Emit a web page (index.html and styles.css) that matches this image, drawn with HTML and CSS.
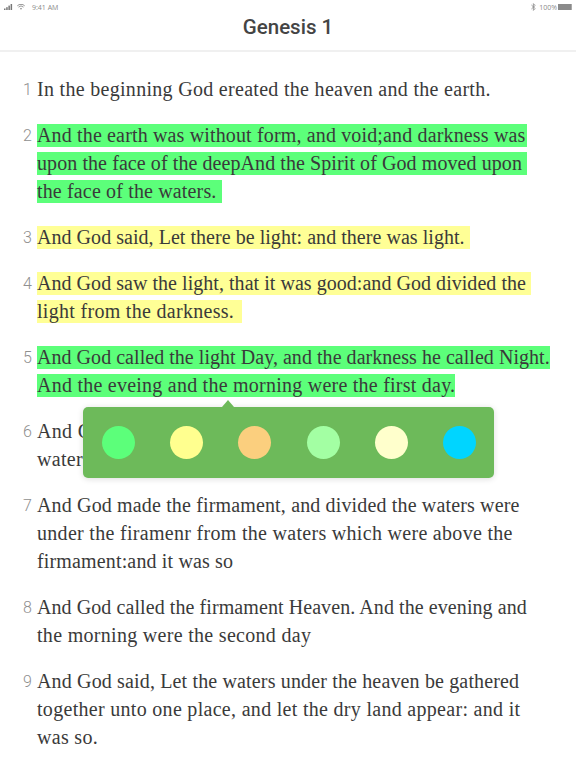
FILE: index.html
```html
<!DOCTYPE html>
<html lang="en">
<head>
<meta charset="utf-8">
<title>Genesis 1</title>
<link rel="stylesheet" href="styles.css">
</head>
<body>
<div class="page">
  <header class="header">
    <div class="status">
      <div class="status-left">
        <svg class="signal" width="11" height="6" viewBox="0 0 11 6"><rect x="0" y="4.5" width="1.5" height="1.5"/><rect x="2.2" y="3.2" width="1.5" height="2.8"/><rect x="4.4" y="1.6" width="1.5" height="4.4"/><rect x="6.6" y="0" width="1.5" height="6"/></svg>
        <svg class="wifi" width="8" height="6" viewBox="0 0 8 6"><path d="M0.3 1.8A5.4 5.4 0 0 1 7.7 1.8M1.5 3.1A3.6 3.6 0 0 1 6.5 3.1" fill="none" stroke="#8a8a8a" stroke-width=".9"/><path d="M2.9 4.4A1.7 1.7 0 0 1 5.1 4.4L4 5.7Z" fill="#8a8a8a"/></svg>
        <span class="time">9:41 AM</span>
      </div>
      <div class="status-right">
        <svg class="bt" width="5" height="8" viewBox="0 0 5 8"><path d="M0.4 2L4.2 5.5L2.4 7.4V0.6L4.2 2.5L0.4 6" fill="none" stroke="#8a8a8a" stroke-width=".8"/></svg>
        <span class="battery-text">100%</span>
        <div class="battery"><div class="battery-fill"></div></div>
      </div>
    </div>
    <h1 class="title">Genesis 1</h1>
  </header>
  <main class="verses">
    <div class="verse"><span class="num">1</span><div class="text"><div class="line">In the beginning God ereated the heaven and the earth.</div></div></div>
    <div class="verse"><span class="num">2</span><div class="text">
      <div class="line t3"><span class="hl green wide">And the earth was without form, and void;and darkness was</span></div>
      <div class="line t2"><span class="hl green wide">upon the face of the deepAnd the Spirit of God moved upon</span></div>
      <div class="line t3"><span class="hl green">the face of the waters. </span></div>
    </div></div>
    <div class="verse"><span class="num">3</span><div class="text">
      <div class="line t1"><span class="hl yellow">And God said, Let there be light: and there was light. </span></div>
    </div></div>
    <div class="verse"><span class="num">4</span><div class="text">
      <div class="line t1"><span class="hl yellow">And God saw the light, that it was good:and God divided the </span></div>
      <div class="line"><span class="hl yellow short">light from the darkness. </span></div>
    </div></div>
    <div class="verse"><span class="num">5</span><div class="text">
      <div class="line t1"><span class="hl green">And God called the light Day, and the darkness he called Night.</span></div>
      <div class="line t4"><span class="hl green">And the eveing and the morning were the first day.</span></div>
    </div></div>
    <div class="verse"><span class="num">6</span><div class="text">
      <div class="line">And God made a firmament in the midst of the waters,</div>
      <div class="line">waters from the waters.</div>
    </div></div>
    <div class="verse"><span class="num">7</span><div class="text">
      <div class="line t3">And God made the firmament, and divided the waters were</div>
      <div class="line">under the firamenr from the waters which were above the</div>
      <div class="line t3">firmament:and it was so</div>
    </div></div>
    <div class="verse"><span class="num">8</span><div class="text">
      <div class="line t2">And God called the firmament Heaven. And the evening and</div>
      <div class="line">the morning were the second day</div>
    </div></div>
    <div class="verse"><span class="num">9</span><div class="text">
      <div class="line t3">And God said, Let the waters under the heaven be gathered</div>
      <div class="line">together unto one place, and let the dry land appear: and it</div>
      <div class="line">was so.</div>
    </div></div>
  </main>
  <div class="palette">
    <span class="dot c1"></span><span class="dot c2"></span><span class="dot c3"></span><span class="dot c4"></span><span class="dot c5"></span><span class="dot c6"></span>
  </div>
</div>
</body>
</html>
```
FILE: styles.css
```css
* { box-sizing: border-box; }
html, body { margin: 0; padding: 0; background: #fff; }
.page { position: relative; width: 576px; height: 768px; overflow: hidden; font-family: "Liberation Serif", serif; }
.header { height: 52px; border-bottom: 2px solid #f0f0f0; }
.status { display: flex; justify-content: space-between; align-items: center; height: 13px; padding: 1px 4px 0 4px; color: #8a8a8a; font-family: "Open Sans", sans-serif; font-size: 7px; }
.status-left, .status-right { display: flex; align-items: center; }
.signal { fill: #777; margin-right: 2px; }
.wifi { margin-right: 7px; }
.bt { margin-right: 3px; }
.battery-text { margin-right: 1px; }
.battery { width: 14px; height: 6px; background: #8a8a8a; border-right: 1px solid #aaa; }
.battery-fill { height: 100%; }
.title { margin: 0; text-align: center; font-family: Roboto, sans-serif; font-weight: 500; font-size: 20.5px; line-height: 28px; color: #444; }
.verses { display: flex; flex-direction: column; gap: 18px; padding: 23px 0 0 23px; }
.verse { display: flex; }
.num { width: 14px; height: 28px; flex: none; padding-top: 1px; font-family: Roboto, sans-serif; font-weight: 300; font-size: 16px; line-height: 28px; color: #8f8f8f; }
.line { height: 28px; line-height: 28px; font-size: 20px; letter-spacing: .3px; color: #3a3a3a; white-space: pre; }
.t1 { letter-spacing: .04px; }
.t2 { letter-spacing: .08px; }
.t3 { letter-spacing: .15px; }
.t4 { letter-spacing: .24px; }
.hl { display: inline-block; height: 22.5px; line-height: 22.5px; }
.wide { width: 490px; }
.short { width: 205px; }
.green { background: #5cff7a; }
.yellow { background: #ffff96; }
.palette { position: absolute; left: 83px; top: 407px; width: 411px; height: 71px; padding: 0 17.5px 0 18.5px; display: flex; justify-content: space-between; align-items: center; background: #6dba5a; border-radius: 5px; box-shadow: 0 1px 6px rgba(0,0,0,.14); }
.palette::before { content: ""; position: absolute; left: 139px; top: -7px; border-left: 6px solid transparent; border-right: 6px solid transparent; border-bottom: 7px solid #6dba5a; }
.dot { width: 33px; height: 33px; border-radius: 50%; }
.c1 { background: #5cff7a; }
.c2 { background: #ffff8f; }
.c3 { background: #fbcf7e; }
.c4 { background: #a3ffa3; }
.c5 { background: #ffffcc; }
.c6 { background: #00d5ff; }
```
